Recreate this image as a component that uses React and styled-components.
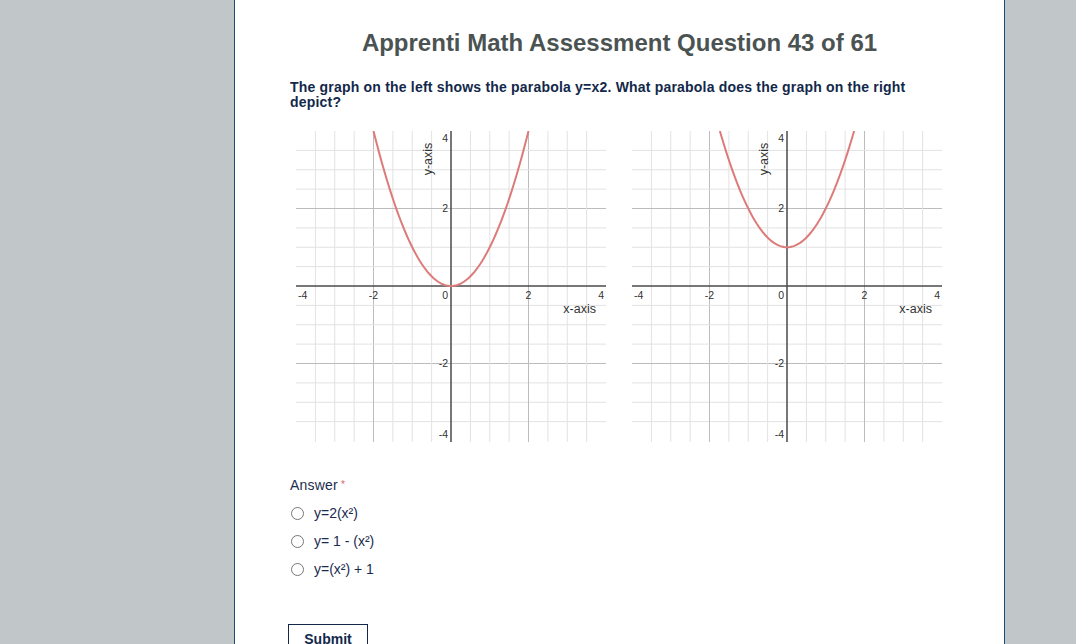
import React from 'react';
import styled, { createGlobalStyle } from 'styled-components';

const GlobalStyle = createGlobalStyle`
  html, body {
    margin: 0;
    padding: 0;
    background-color: #c1c6c9;
    font-family: Arial, "Liberation Sans", Helvetica, sans-serif;
    overflow: hidden;
  }
`;

const Page = styled.div`
  display: flex;
  justify-content: flex-start;
  padding-left: 234px;
  height: 644px;
  overflow: hidden;
`;

const Panel = styled.main`
  box-sizing: border-box;
  width: 771px;
  min-height: 760px;
  background-color: #fff;
  border-left: 1px solid #1c4a7a;
  border-right: 1px solid #1c4a7a;
  padding: 29px 0 0 55px;
`;

const Title = styled.h1`
  margin: 0 55px 0 0;
  text-align: center;
  font-size: 24px;
  line-height: 28px;
  font-weight: bold;
  color: #4b5352;
`;

const Question = styled.p`
  width: 630px;
  margin: 23px 0 0 0;
  font-size: 14px;
  line-height: 15px;
  letter-spacing: 0.2px;
  font-weight: bold;
  color: #12284a;
`;

const GraphRow = styled.div`
  display: flex;
  gap: 26px;
  margin-top: 21px;
  padding-left: 6px;
`;

const Answer = styled.div`
  margin-top: 34px;
  font-size: 14px;
  line-height: 18px;
  letter-spacing: 0.2px;
  color: #1d2d4d;
`;

const Required = styled.span`
  color: #e0616b;
  font-size: 10px;
  vertical-align: top;
  margin-left: 3px;
`;

const Options = styled.div`
  display: flex;
  flex-direction: column;
  gap: 10px;
  margin-top: 10px;
`;

const Option = styled.label`
  display: flex;
  align-items: center;
  gap: 10px;
  font-size: 14px;
  line-height: 18px;
  color: #1a2b4f;
  cursor: pointer;

  & > input {
    margin: 0 0 0 1px;
    width: 13px;
    height: 13px;
  }
`;

const SubmitButton = styled.button`
  margin-top: 46px;
  margin-left: -2px;
  width: 80px;
  height: 30px;
  background: #fff;
  border: 1px solid #12284a;
  font-family: inherit;
  font-size: 14px;
  font-weight: bold;
  color: #12284a;
  padding: 0;
`;

const S = 38.75;
const X = (x) => (x + 4) * S;
const Y = (y) => (4 - y) * S;

function Graph({ shift }) {
  const steps = [];
  for (let i = -7; i <= 7; i++) steps.push(i / 2);

  const lim = Math.sqrt(4 - shift);
  const pts = [];
  for (let k = 0; k <= 80; k++) {
    const x = -lim + (2 * lim * k) / 80;
    pts.push(`${X(x).toFixed(2)},${Y(x * x + shift).toFixed(2)}`);
  }

  const lineColor = (v) => (Math.abs(v) === 2 ? '#bcbcbc' : '#e2e2e2');

  return (
    <svg width="310" height="311" viewBox="0 0 310 311">
      {steps.filter((v) => v !== 0).map((v) => (
        <g key={v}>
          <line x1={X(v)} y1="0" x2={X(v)} y2="311" stroke={lineColor(v)} strokeWidth="1" />
          <line x1="0" y1={Y(v)} x2="310" y2={Y(v)} stroke={lineColor(v)} strokeWidth="1" />
        </g>
      ))}
      <line x1={X(0)} y1="0" x2={X(0)} y2="311" stroke="#4a4a4a" strokeWidth="1.5" />
      <line x1="0" y1={Y(0)} x2="310" y2={Y(0)} stroke="#4a4a4a" strokeWidth="1.5" />

      <g fontFamily="Arial, 'Liberation Sans', sans-serif" fontSize="10.5" fill="#333">
        <text x="2" y="168">-4</text>
        <text x={X(-2)} y="168" textAnchor="middle">-2</text>
        <text x="152" y="168" textAnchor="end">0</text>
        <text x={X(2)} y="168" textAnchor="middle">2</text>
        <text x="308" y="168" textAnchor="end">4</text>
        <text x="152" y="11" textAnchor="end">4</text>
        <text x="152" y="81" textAnchor="end">2</text>
        <text x="152" y="236" textAnchor="end">-2</text>
        <text x="152" y="307" textAnchor="end">-4</text>
      </g>
      <text x="300" y="182" textAnchor="end" fontFamily="Arial, 'Liberation Sans', sans-serif" fontSize="12.5" fill="#333">x-axis</text>
      <text transform="translate(136 28) rotate(-90)" textAnchor="middle" fontFamily="Arial, 'Liberation Sans', sans-serif" fontSize="12.5" fill="#333">y-axis</text>

      <polyline points={pts.join(' ')} fill="none" stroke="#dc7b79" strokeWidth="2" />
    </svg>
  );
}

const answers = ['y=2(x²)', 'y= 1 - (x²)', 'y=(x²) + 1'];

function App() {
  return (
    <React.Fragment>
      <GlobalStyle />
      <Page>
        <Panel>
          <Title>Apprenti Math Assessment Question 43 of 61</Title>
          <Question>
            The graph on the left shows the parabola y=x2. What parabola does the graph on the right depict?
          </Question>
          <GraphRow>
            <Graph shift={0} />
            <Graph shift={1} />
          </GraphRow>
          <Answer>
            Answer<Required>*</Required>
          </Answer>
          <Options>
            {answers.map((a) => (
              <Option key={a}>
                <input type="radio" name="answer" value={a} />
                {a}
              </Option>
            ))}
          </Options>
          <SubmitButton type="button">Submit</SubmitButton>
        </Panel>
      </Page>
    </React.Fragment>
  );
}

export default App;
